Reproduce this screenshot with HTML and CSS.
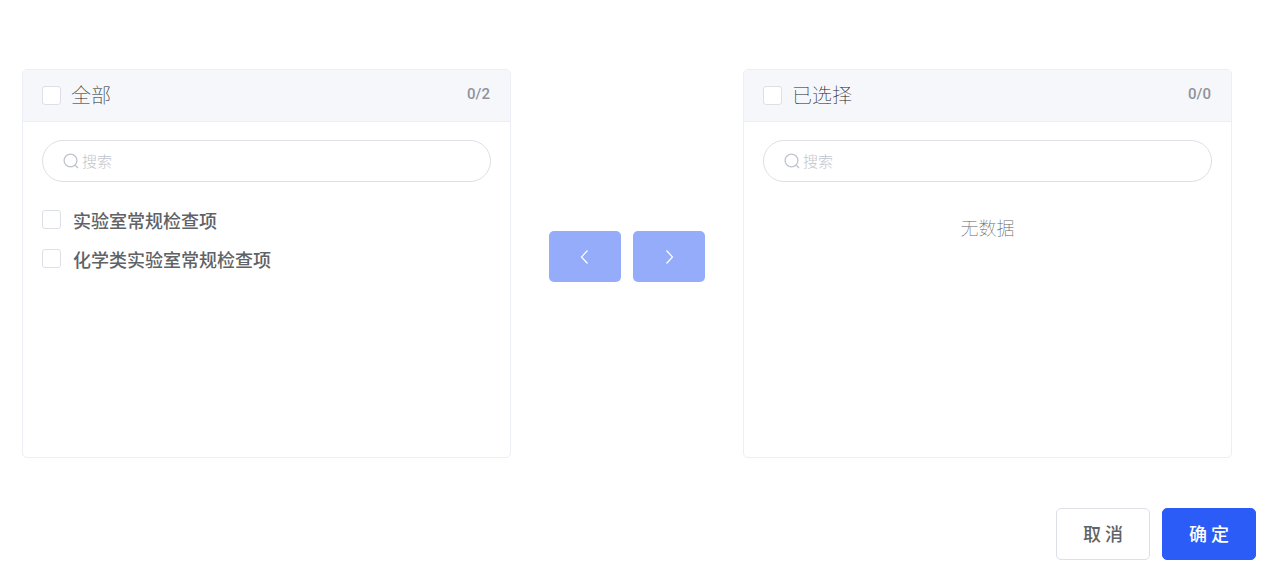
FILE: index.html
```html
<!DOCTYPE html>
<html lang="zh-CN">
<head>
<meta charset="utf-8">
<title>检查项选择</title>
<link rel="stylesheet" href="styles.css">
</head>
<body>
<main class="dialog">
  <div class="transfer">
    <section class="panel">
      <header class="panel-header">
        <label class="select-all"><input class="checkbox" type="checkbox"><span class="title">全部</span></label>
        <span class="count">0/2</span>
      </header>
      <div class="panel-body">
        <label class="search">
          <svg class="search-icon" viewBox="0 0 16 16" aria-hidden="true"><circle cx="7.5" cy="7.5" r="6.4"/><path d="M12.2 12.2 15 15"/></svg>
          <input class="search-input" type="text" placeholder="搜索" aria-label="搜索">
        </label>
        <ul class="items">
          <li><label class="item"><input class="checkbox" type="checkbox"><span>实验室常规检查项</span></label></li>
          <li><label class="item"><input class="checkbox" type="checkbox"><span>化学类实验室常规检查项</span></label></li>
        </ul>
      </div>
    </section>
    <div class="moves">
      <button class="move" type="button" disabled aria-label="移到左侧"><svg class="arrow" viewBox="0 0 18 18" aria-hidden="true"><path d="M11.5 2.5 5.5 9l6 6.5"/></svg></button>
      <button class="move" type="button" disabled aria-label="移到右侧"><svg class="arrow" viewBox="0 0 18 18" aria-hidden="true"><path d="m6.5 2.5 6 6.5-6 6.5"/></svg></button>
    </div>
    <section class="panel">
      <header class="panel-header">
        <label class="select-all"><input class="checkbox" type="checkbox"><span class="title">已选择</span></label>
        <span class="count">0/0</span>
      </header>
      <div class="panel-body">
        <label class="search">
          <svg class="search-icon" viewBox="0 0 16 16" aria-hidden="true"><circle cx="7.5" cy="7.5" r="6.4"/><path d="M12.2 12.2 15 15"/></svg>
          <input class="search-input" type="text" placeholder="搜索" aria-label="搜索">
        </label>
        <p class="empty">无数据</p>
      </div>
    </section>
  </div>
  <footer class="actions">
    <button class="button" type="button">取 消</button>
    <button class="button button-primary" type="button">确 定</button>
  </footer>
</main>
</body>
</html>
```
FILE: styles.css
```css
* {
  box-sizing: border-box;
}

body {
  margin: 0;
  background: #fff;
  color: #606266;
  font-family: "Noto Sans CJK SC", sans-serif;
}

button,
input {
  font: inherit;
}

.dialog {
  padding: 69px 24px 14px 22px;
}

.transfer {
  display: grid;
  grid-template-columns: 1fr auto 1fr;
  padding-right: 24px;
}

.panel {
  min-height: 389px;
  border: 1px solid #ebeef5;
  border-radius: 5px;
  overflow: hidden;
}

.panel-header {
  display: flex;
  align-items: center;
  justify-content: space-between;
  height: 52px;
  padding: 0 20px 0 19px;
  border-bottom: 1px solid #ebeef5;
  background: #f5f7fb;
}

.select-all {
  display: flex;
  align-items: center;
  gap: 10px;
  color: #18191b;
  font-size: 20px;
  font-weight: 100;
  line-height: 30px;
}

.title {
  padding-bottom: 2px;
}

.checkbox {
  appearance: none;
  flex: none;
  width: 19px;
  height: 19px;
  margin: 0;
  border: 1px solid #dcdfe6;
  border-radius: 3px;
  background: #fff;
}

.checkbox:checked {
  border-color: #2b5cf8;
  background: #2b5cf8;
}

.count {
  padding-bottom: 3px;
  color: #909399;
  font-family: Roboto, sans-serif;
  font-size: 15px;
  font-weight: 500;
}

.panel-body {
  padding: 18px 19px;
}

.search {
  display: flex;
  align-items: center;
  gap: 3px;
  height: 42px;
  padding: 0 20px;
  border: 1px solid #dcdfe6;
  border-radius: 21px;
}

.search-icon {
  flex: none;
  width: 16px;
  height: 16px;
  fill: none;
  stroke: #c0c4cc;
  stroke-width: 1.3;
}

.search-input {
  flex: 1;
  min-width: 0;
  padding: 0 0 2px;
  border: 0;
  outline: 0;
  background: none;
  font-size: 15px;
  font-weight: 300;
}

.search-input::placeholder {
  color: #c0c4cc;
}

.items {
  margin: 18px 0 0;
  padding: 0;
  list-style: none;
}

.item {
  display: flex;
  align-items: center;
  gap: 12px;
  height: 39px;
  font-size: 18px;
  font-weight: 500;
}

.empty {
  margin: 26px 0 0;
  color: #606266;
  font-size: 18px;
  font-weight: 100;
  line-height: 39px;
  text-align: center;
}

.moves {
  display: flex;
  align-items: center;
  gap: 12px;
  padding: 0 38px 14px;
}

.move {
  display: flex;
  align-items: center;
  justify-content: center;
  width: 72px;
  height: 51px;
  padding: 0;
  border: 0;
  border-radius: 5px;
  background: #95acfb;
}

.arrow {
  width: 18px;
  height: 18px;
  fill: none;
  stroke: #fff;
  stroke-width: 1.2;
}

.actions {
  display: flex;
  justify-content: flex-end;
  gap: 12px;
  margin-top: 50px;
}

.button {
  height: 52px;
  padding: 0 26px 2px;
  border: 1px solid #dcdfe6;
  border-radius: 5px;
  background: #fff;
  color: #606266;
  font-size: 18px;
  font-weight: 500;
}

.button-primary {
  border-color: #2b5cf8;
  background: #2b5cf8;
  color: #fff;
}
```
